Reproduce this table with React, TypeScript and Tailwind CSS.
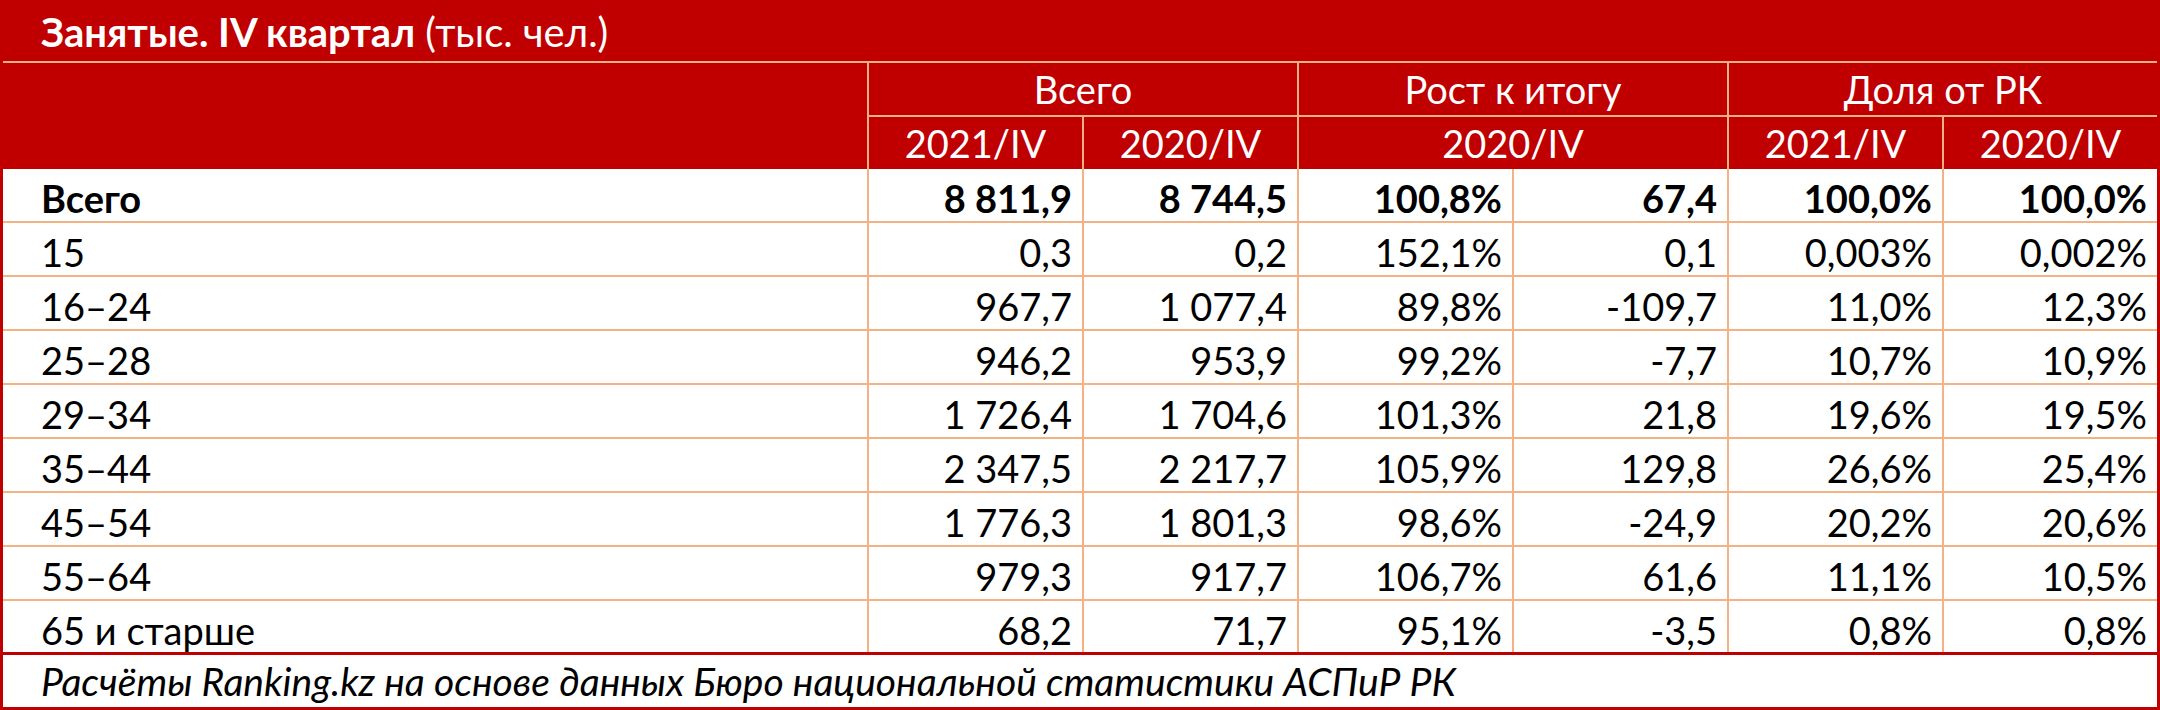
const rows = [
  { label: 'Всего', v: ['8 811,9', '8 744,5', '100,8%', '67,4', '100,0%', '100,0%'], bold: true },
  { label: '15', v: ['0,3', '0,2', '152,1%', '0,1', '0,003%', '0,002%'] },
  { label: '16–24', v: ['967,7', '1 077,4', '89,8%', '-109,7', '11,0%', '12,3%'] },
  { label: '25–28', v: ['946,2', '953,9', '99,2%', '-7,7', '10,7%', '10,9%'] },
  { label: '29–34', v: ['1 726,4', '1 704,6', '101,3%', '21,8', '19,6%', '19,5%'] },
  { label: '35–44', v: ['2 347,5', '2 217,7', '105,9%', '129,8', '26,6%', '25,4%'] },
  { label: '45–54', v: ['1 776,3', '1 801,3', '98,6%', '-24,9', '20,2%', '20,6%'] },
  { label: '55–64', v: ['979,3', '917,7', '106,7%', '61,6', '11,1%', '10,5%'] },
  { label: '65 и старше', v: ['68,2', '71,7', '95,1%', '-3,5', '0,8%', '0,8%'] },
];

function App() {
  return (
    <div className="w-[2160px] h-[710px] bg-white font-['Lato',sans-serif] text-[38px] leading-none text-black border-x-[3px] border-b-[3px] border-[#c00000]">
      {/* Title */}
      <div className="h-[63px] bg-[#c00000] border-b-2 border-[#f4b183] flex items-center pl-[38px] pt-[2px] text-white text-[40px]">
        <span className="font-bold">Занятые. IV квартал</span>
        <span>&nbsp;(тыс. чел.)</span>
      </div>

      {/* Header */}
      <div className="grid grid-cols-[864px_repeat(6,1fr)] grid-rows-[54px_52px] bg-[#c00000] text-white">
        <div className="row-span-2" />
        <div className="col-span-2 border-l-2 border-b-2 border-[#f4b183] flex items-center justify-center">Всего</div>
        <div className="col-span-2 border-l-2 border-b-2 border-[#f4b183] flex items-center justify-center">Рост к итогу</div>
        <div className="col-span-2 border-l-2 border-b-2 border-[#f4b183] flex items-center justify-center">Доля от РК</div>
        <div className="border-l-2 border-[#f4b183] flex items-center justify-center">2021/IV</div>
        <div className="border-l-2 border-[#f4b183] flex items-center justify-center">2020/IV</div>
        <div className="col-span-2 border-l-2 border-[#f4b183] flex items-center justify-center">2020/IV</div>
        <div className="border-l-2 border-[#f4b183] flex items-center justify-center">2021/IV</div>
        <div className="border-l-2 border-[#f4b183] flex items-center justify-center">2020/IV</div>
      </div>

      {/* Body */}
      {rows.map((row, i) => (
        <div
          key={row.label}
          className={`grid grid-cols-[864px_repeat(6,1fr)] h-[54px] ${
            i === rows.length - 1 ? 'border-b-[3px] border-[#c00000]' : 'border-b-2 border-[#f4b183]'
          } ${row.bold ? 'font-bold' : ''}`}
        >
          <div className="flex items-center pl-[38px] pt-[6px]">{row.label}</div>
          {row.v.map((val, j) => (
            <div key={j} className="border-l-2 border-[#f4b183] flex items-center justify-end pr-[10px] pt-[6px]">
              {val}
            </div>
          ))}
        </div>
      ))}

      {/* Footer */}
      <div className="h-[52px] flex items-center pl-[38px] italic text-[39px]">
        Расчёты Ranking.kz на основе данных Бюро национальной статистики АСПиР РК
      </div>
    </div>
  );
}

export default App;
